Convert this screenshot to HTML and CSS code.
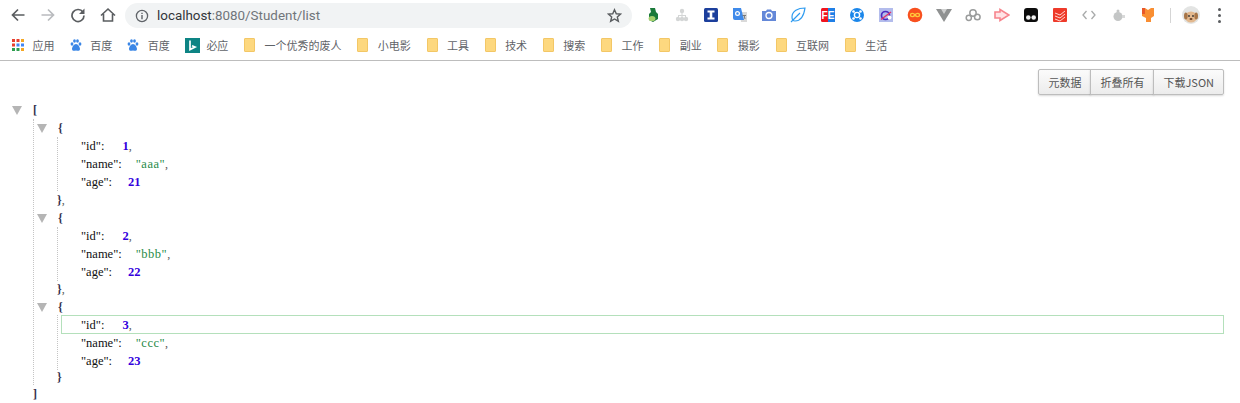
FILE: index.html
```html
<!DOCTYPE html>
<html lang="zh-CN">
<head>
    <meta charset="UTF-8">
    <title>localhost:8080/Student/list</title>
    <link rel="stylesheet" href="styles.css">
</head>
<body>
    <header class="chrome">
        <div class="toolbar">
            <div class="nav">
                <svg class="nav-icon" viewBox="0 0 16 16"><path d="M14.500 8H3M8 2.500 2.500 8 8 13.500" fill="none" stroke="#5a5d60" stroke-width="1.700"/></svg>
                <svg class="nav-icon" viewBox="0 0 16 16"><path d="M1.500 8H13M8 2.500 13.500 8 8 13.500" fill="none" stroke="#b9bbbe" stroke-width="1.700"/></svg>
                <svg class="nav-icon" viewBox="0 0 16 16"><path d="M13 5.200A6 6 0 1 0 14 8.500" fill="none" stroke="#5a5d60" stroke-width="1.700"/><path d="M14.500 1.500V7H9z" fill="#5a5d60"/></svg>
                <svg class="nav-icon" viewBox="0 0 16 16"><path d="M1 8.500 8 2l7 6.500M3.500 7v7h9V7" fill="none" stroke="#5a5d60" stroke-width="1.600"/></svg>
            </div>
            <div class="address">
                <svg class="info" viewBox="0 0 14 14"><circle cx="7" cy="7" r="5.600" fill="none" stroke="#5f6368" stroke-width="1.300"/><path d="M7 6v4.200M7 3.700v1.400" stroke="#5f6368" stroke-width="1.400"/></svg>
                <span class="url"><b>localhost</b>:8080/Student/list</span>
                <svg class="star" viewBox="0 0 16 16"><path d="m8 1.800 1.900 4.300 4.600.4-3.500 3 1.100 4.600L8 11.700l-4.100 2.400L5 9.500l-3.500-3 4.600-.4z" fill="none" stroke="#5a5d60" stroke-width="1.500"/></svg>
            </div>
            <div class="extensions">
                <svg class="ext" viewBox="0 0 16 16"><path d="M5 1h5l1 4 2 2v5l-5 3-4-2V7l2-2z" fill="#1a7a3a"/><ellipse cx="7" cy="11.500" rx="3.400" ry="2.600" fill="#a4cf6c"/></svg>
                <svg class="ext" viewBox="0 0 16 16"><g fill="#d4d6d6"><circle cx="8" cy="4" r="2.200"/><circle cx="4" cy="12" r="2.200"/><circle cx="8" cy="12" r="2.200"/><circle cx="12" cy="12" r="2.200"/><path d="M7.500 5h1v3H12v3h-1V9H8.500v2h-1V9H5v2H4V8h3.500z"/></g></svg>
                <svg class="ext" viewBox="0 0 16 16"><rect x="1" y="1" width="14" height="14" rx="1.500" fill="#1c3f9c"/><path d="M4.500 3.500h7v2H9.300v5h2.200v2h-7v-2h2.200v-5H4.500z" fill="#fff"/></svg>
                <svg class="ext" viewBox="0 0 16 16"><path d="M8 5h7v10H9z" fill="#d9d9d9"/><path d="M1 1h8l3 12H3a2 2 0 0 1-2-2z" fill="#3f8aea"/><circle cx="5.500" cy="6.500" r="1.900" fill="none" stroke="#fff" stroke-width="1.200"/><path d="M10.500 8.500h3.500M12 8l1 4" stroke="#777" stroke-width="1"/></svg>
                <svg class="ext" viewBox="0 0 16 16"><path d="M1 4h4l1-1.500h4L11 4h4v10H1z" fill="#6488d8"/><circle cx="8" cy="8.500" r="3" fill="none" stroke="#fff" stroke-width="1.300"/></svg>
                <svg class="ext" viewBox="0 0 16 16"><path d="M15 1C8 1 2 4 2 10c0 2 1 4 3 4 6 0 9-6 10-13zM1 15 10 6" fill="none" stroke="#2e9bf0" stroke-width="1.200"/></svg>
                <svg class="ext" viewBox="0 0 16 16"><rect x="1" y="1" width="14" height="14" rx="1.500" fill="#f0141e"/><rect x="8" y="1" width="7" height="14" fill="#1f7fe6"/><text x="8" y="12" class="ext-text">FE</text></svg>
                <svg class="ext" viewBox="0 0 16 16"><circle cx="8" cy="8" r="7" fill="#1a86ea"/><circle cx="8" cy="8" r="2.600" fill="none" stroke="#fff" stroke-width="1.400"/><g fill="#fff"><circle cx="4.500" cy="4.500" r="1.300"/><circle cx="11.500" cy="4.500" r="1.300"/><circle cx="4.500" cy="11.500" r="1.300"/><circle cx="11.500" cy="11.500" r="1.300"/></g></svg>
                <svg class="ext" viewBox="0 0 16 16"><rect x="1" y="1" width="14" height="14" fill="#b3bcec"/><circle cx="7.500" cy="8.500" r="4" fill="none" stroke="#4a2cc0" stroke-width="1.700"/><path d="M3 12.500 13 5" stroke="#e0336a" stroke-width="1.400"/><circle cx="11.500" cy="10.500" r="2" fill="#fff"/></svg>
                <svg class="ext" viewBox="0 0 16 16"><circle cx="8" cy="8" r="7.300" fill="#f8501e"/><path d="M8 8C6.500 5.800 3.500 6 3.500 8s3 2.200 4.500 0 4.500-2 4.500 0-3 2.200-4.500 0z" fill="none" stroke="#ffc93c" stroke-width="1.400"/></svg>
                <svg class="ext" viewBox="0 0 16 16"><path d="M0 2h16L8 15z" fill="#8f9191"/><path d="M5 2h6L8 7z" fill="#cfd0d0"/></svg>
                <svg class="ext" viewBox="0 0 16 16"><g fill="none" stroke="#9a9c9c" stroke-width="1.500"><circle cx="3.800" cy="10.800" r="2.600"/><circle cx="8" cy="6" r="3.200"/><circle cx="12.300" cy="10" r="2.800"/></g></svg>
                <svg class="ext" viewBox="0 0 16 16"><path d="M1 5h5V2.500L15 8l-9 5.500V11H1z" fill="#ffe3e5" stroke="#f7848c" stroke-width="1.600"/></svg>
                <svg class="ext" viewBox="0 0 16 16"><rect x="1" y="1" width="14" height="14" rx="3" fill="#0c0c0c"/><circle cx="5.300" cy="10.500" r="2.300" fill="#f2f2f2"/><circle cx="10.700" cy="10.500" r="2.300" fill="#f2f2f2"/></svg>
                <svg class="ext" viewBox="0 0 16 16"><rect x="1" y="1" width="14" height="14" rx="1" fill="#ee3a2a"/><path d="m3 6 5 2 5-4M3 9l5 2 5-4M3 12l5 2 5-4" stroke="#ffd7d0" stroke-width="1" fill="none"/></svg>
                <svg class="ext" viewBox="0 0 16 16"><path d="M5.500 4 2 8l3.500 4M10.500 4 14 8l-3.500 4" fill="none" stroke="#a8aaaa" stroke-width="1.300"/></svg>
                <svg class="ext" viewBox="0 0 16 16"><circle cx="7" cy="9.500" r="4.500" fill="#c4c6c6"/><circle cx="7" cy="4" r="1.500" fill="#c4c6c6"/><path d="M11 8h3v3h-3z" fill="#d8d9d9"/></svg>
                <svg class="ext" viewBox="0 0 16 16"><path d="M2 1h3l3 2 3-2h3v8l-3 2v4H6v-4L2 9z" fill="#f98e32"/><path d="M2 1h3v6H2z" fill="#e8582a"/></svg>
            </div>
            <span class="divider"></span>
            <svg class="avatar" viewBox="0 0 18 18"><circle cx="9" cy="9" r="9" fill="#e3e4e3"/><ellipse cx="9" cy="11" rx="6" ry="5.500" fill="#e2b88e"/><ellipse cx="3.800" cy="10" rx="1.800" ry="3.500" fill="#a87648"/><ellipse cx="14.200" cy="10" rx="1.800" ry="3.500" fill="#a87648"/><circle cx="7" cy="10" r=".9" fill="#333"/><circle cx="11" cy="10" r=".9" fill="#333"/><ellipse cx="9" cy="13" rx="1.500" ry="1" fill="#6b4226"/></svg>
            <div class="menu"><i></i><i></i><i></i></div>
        </div>
        <nav class="bookmarks">
            <a class="mark">
                <svg class="mark-icon" viewBox="0 0 12 12"><rect x="0" y="0" width="3" height="3" fill="#e8402f"/><rect x="4.500" y="0" width="3" height="3" fill="#e8402f"/><rect x="9" y="0" width="3" height="3" fill="#f5a623"/><rect x="0" y="4.500" width="3" height="3" fill="#e8402f"/><rect x="4.500" y="4.500" width="3" height="3" fill="#4285f4"/><rect x="9" y="4.500" width="3" height="3" fill="#4285f4"/><rect x="0" y="9" width="3" height="3" fill="#2e9e4f"/><rect x="4.500" y="9" width="3" height="3" fill="#2e9e4f"/><rect x="9" y="9" width="3" height="3" fill="#f5a623"/></svg>
                应用
            </a>
            <a class="mark">
                <svg class="mark-icon" viewBox="0 0 12 12"><defs><g id="paw" fill="#3a86e6"><ellipse cx="2" cy="5" rx="1.400" ry="1.800"/><ellipse cx="4.500" cy="2" rx="1.400" ry="1.800"/><ellipse cx="7.500" cy="2" rx="1.400" ry="1.800"/><ellipse cx="10" cy="5" rx="1.400" ry="1.800"/><path d="M6 5c-2 0-4 3-4 5 0 2 2 2 4 1.500 2 .5 4 .5 4-1.500 0-2-2-5-4-5z"/></g></defs><use href="#paw"/></svg>
                百度
            </a>
            <a class="mark">
                <svg class="mark-icon" viewBox="0 0 12 12"><use href="#paw"/></svg>
                百度
            </a>
            <a class="mark mark-bing">
                <svg class="bing" viewBox="0 0 15 15"><rect width="15" height="15" fill="#0d8484"/><path d="M5 2.500v9l5-2.500-3-1.200" fill="none" stroke="#fff" stroke-width="1.700"/></svg>
                必应
            </a>
            <a class="mark"><span class="folder"></span>一个优秀的废人</a>
            <a class="mark"><span class="folder"></span>小电影</a>
            <a class="mark"><span class="folder"></span>工具</a>
            <a class="mark"><span class="folder"></span>技术</a>
            <a class="mark"><span class="folder"></span>搜索</a>
            <a class="mark"><span class="folder"></span>工作</a>
            <a class="mark"><span class="folder"></span>副业</a>
            <a class="mark"><span class="folder"></span>摄影</a>
            <a class="mark"><span class="folder"></span>互联网</a>
            <a class="mark"><span class="folder"></span>生活</a>
        </nav>
    </header>

    <main>
        <div class="actions">
            <button class="action">元数据</button>
            <button class="action">折叠所有</button>
            <button class="action">下载JSON</button>
        </div>

        <div class="json">
            <div class="line"><span class="toggle"></span><span class="brace">[</span></div>
            <div class="array">
                <div class="line"><span class="toggle"></span><span class="brace">{</span></div>
                <div class="object">
                    <div class="prop"><span class="key key-id">"id":</span><span class="num">1</span><span class="comma">,</span></div>
                    <div class="prop"><span class="key">"name":</span><span class="str">"aaa"</span><span class="comma">,</span></div>
                    <div class="prop"><span class="key key-age">"age":</span><span class="num">21</span></div>
                </div>
                <div class="close"><span class="brace">}</span><span class="comma">,</span></div>

                <div class="line"><span class="toggle"></span><span class="brace">{</span></div>
                <div class="object">
                    <div class="prop"><span class="key key-id">"id":</span><span class="num">2</span><span class="comma">,</span></div>
                    <div class="prop"><span class="key">"name":</span><span class="str">"bbb"</span><span class="comma">,</span></div>
                    <div class="prop"><span class="key key-age">"age":</span><span class="num">22</span></div>
                </div>
                <div class="close close-short"><span class="brace">}</span><span class="comma">,</span></div>

                <div class="line"><span class="toggle"></span><span class="brace">{</span></div>
                <div class="object">
                    <div class="prop active"><span class="key key-id">"id":</span><span class="num">3</span><span class="comma">,</span></div>
                    <div class="prop"><span class="key">"name":</span><span class="str">"ccc"</span><span class="comma">,</span></div>
                    <div class="prop"><span class="key key-age">"age":</span><span class="num">23</span></div>
                </div>
                <div class="close close-last"><span class="brace">}</span></div>
            </div>
            <div class="close-root"><span class="brace">]</span></div>
        </div>
    </main>
</body>
</html>
```
FILE: styles.css
```css
* {
    box-sizing: border-box;
}
body {
    margin: 0;
    background-color: #fff;
    font-family: "Noto Sans CJK SC", "Liberation Sans", sans-serif;
    overflow: hidden;
}
.chrome {
    height: 61px;
    border-bottom: 1px solid #bdbdbd;
}
.toolbar {
    height: 30px;
    display: flex;
    align-items: center;
    padding-left: 10px;
}
.nav {
    display: flex;
    gap: 14px;
    width: 115px;
}
.nav-icon {
    width: 16px;
    height: 16px;
}
.address {
    width: 507px;
    height: 25px;
    margin-top: 1px;
    padding: 0 9px 0 10px;
    display: flex;
    align-items: center;
    background-color: #f1f3f4;
    border-radius: 13px;
}
.info {
    width: 14px;
    height: 14px;
    margin-right: 8px;
}
.url {
    flex: 1;
    font: 13.4px Roboto, sans-serif;
    color: #70757a;
}
.url b {
    font-weight: normal;
    color: #33363a;
}
.star {
    width: 15px;
    height: 15px;
    margin-right: 1px;
}
.extensions {
    display: flex;
    gap: 13.1px;
    margin-left: 13px;
}
.ext {
    width: 16px;
    height: 16px;
}
.ext-text {
    font: bold 10px "Liberation Sans", sans-serif;
    fill: #fff;
    text-anchor: middle;
}
.divider {
    width: 1px;
    height: 15px;
    margin-left: 14px;
    background-color: #d5d5d5;
}
.avatar {
    width: 18px;
    height: 18px;
    margin-left: 11.5px;
}
.menu {
    display: flex;
    flex-direction: column;
    gap: 3px;
    margin-left: 18px;
}
.menu i {
    width: 3px;
    height: 3px;
    border-radius: 50%;
    background-color: #5a5d60;
}
.bookmarks {
    height: 30px;
    display: flex;
    align-items: center;
    gap: 15px;
    padding-left: 12px;
}
.mark {
    display: flex;
    align-items: center;
    gap: 8.6px;
    font-size: 11px;
    color: #5f6368;
}
.mark-icon {
    width: 12px;
    height: 12px;
}
.bing {
    width: 15px;
    height: 15px;
    margin-right: -2px;
}
.folder {
    width: 11px;
    height: 14px;
    margin: 0 0.8px;
    background-color: #fdd87f;
    border: 1px solid #f3c766;
    border-radius: 1px;
}
.actions {
    display: flex;
    justify-content: flex-end;
    padding: 8px 16px 0 0;
}
.action {
    height: 26px;
    padding: 0 9px;
    margin-left: -1px;
    font-family: inherit;
    font-size: 11px;
    color: #555;
    background: linear-gradient(#fbfbfb, #ececec);
    border: 1px solid #bdbdbd;
    border-radius: 0;
    box-shadow: 0 1px 2px rgba(0,0,0,0.15);
}
.action:first-child {
    border-radius: 2px 0 0 2px;
}
.action:last-child {
    border-radius: 0 2px 2px 0;
}
.json {
    margin-top: 6px;
    padding-left: 12px;
    font: 12px/18px "Liberation Serif", serif;
    color: #222;
}
.line, .close, .close-root, .prop {
    height: 18px;
}
.line {
    display: flex;
    align-items: center;
}
.toggle {
    width: 0;
    height: 0;
    margin-right: 11px;
    border-left: 5px solid transparent;
    border-right: 5px solid transparent;
    border-top: 9px solid #b5b5b5;
}
.brace {
    font-weight: bold;
    color: #33304d;
}
.array {
    margin-left: 21px;
    padding-left: 3px;
    border-left: 1px dotted #c4c4c4;
}
.object {
    margin-left: 20px;
    padding-left: 3px;
    border-left: 1px dotted #c4c4c4;
}
.prop {
    padding-left: 19px;
    margin-right: 16px;
    border: 1px solid transparent;
    line-height: 16px;
}
.active {
    height: 19px;
    margin-top: -1px;
    line-height: 18px;
    border-color: #b4e0bb;
}
.close {
    padding-left: 20px;
}
.close-short {
    height: 17px;
    line-height: 16px;
}
.close-last {
    height: 15px;
    line-height: 15px;
}
.close-root {
    padding-left: 21px;
}
.key {
    display: inline-block;
    margin-right: 14px;
    font-size: 12.5px;
    color: #111;
}
.key-id {
    margin-right: 18px;
}
.key-age {
    margin-right: 16px;
}
.num {
    font-weight: bold;
    font-size: 12.5px;
    color: #3300dd;
}
.str {
    letter-spacing: 0.5px;
    font-size: 12.5px;
    color: #1f8a48;
}
.comma {
    color: #555;
}
```
